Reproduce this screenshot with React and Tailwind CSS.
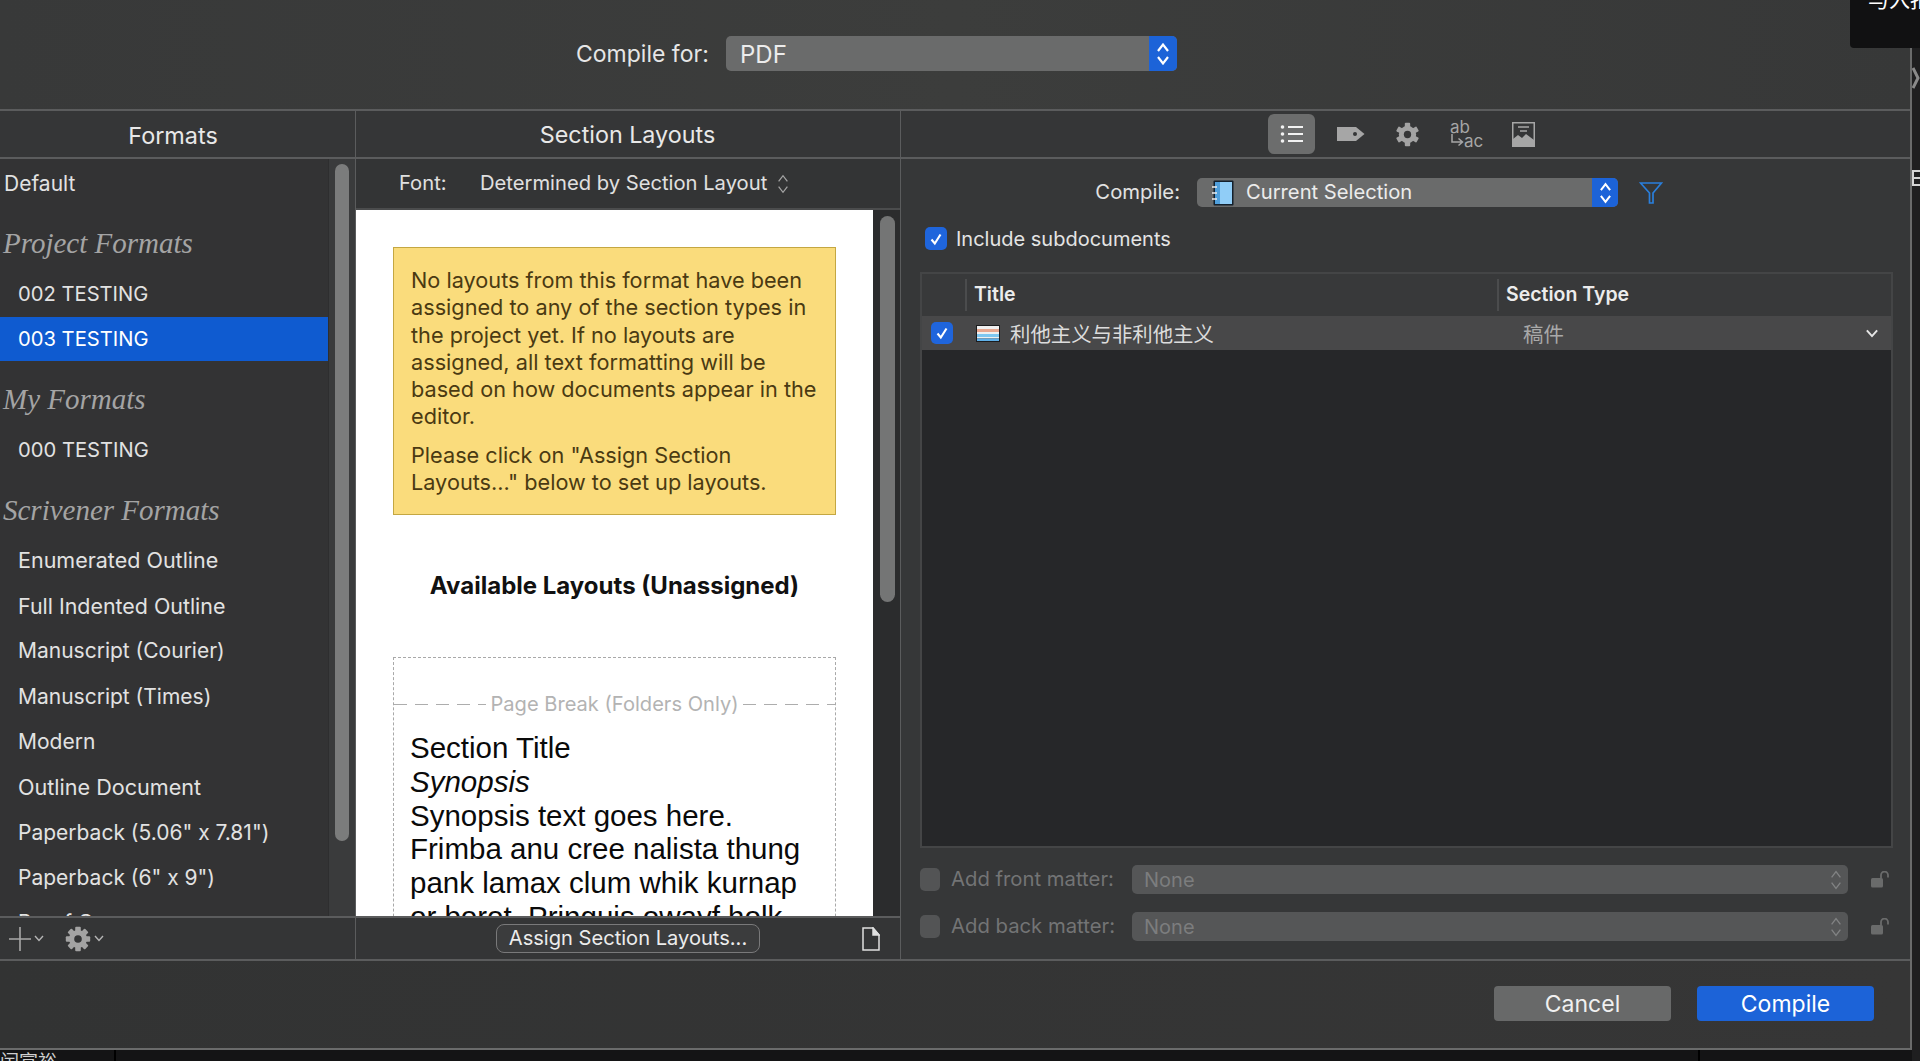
import React from "react";

const ui = "font-['Inter','Noto_Sans_CJK_SC',sans-serif]";

function Stepper({ className = "w-[16px] h-[26px]", color = "#fff", width = 2.2 }) {
  return (
    <svg viewBox="0 0 16 26" className={className} fill="none" stroke={color} strokeWidth={width}>
      <path d="M3 10 L8 3.5 L13 10" />
      <path d="M3 16 L8 22.5 L13 16" />
    </svg>
  );
}

function Chevron({ className = "w-[10px] h-[7px]", color = "#b5b5b5", width = 1.4 }) {
  return (
    <svg viewBox="0 0 10 7" className={className} fill="none" stroke={color} strokeWidth={width}>
      <path d="M1 1 L5 5.5 L9 1" />
    </svg>
  );
}

function Gear({ size = 26, teeth = 8, hole = "#343536", color = "#a3a3a3" }) {
  const items = Array.from({ length: teeth }, (_, i) => (i * 360) / teeth);
  return (
    <svg viewBox="0 0 26 26" width={size} height={size}>
      {items.map((a) => (
        <rect key={a} x="10.2" y="0.8" width="5.6" height="6" rx="1" fill={color} transform={`rotate(${a} 13 13)`} />
      ))}
      <circle cx="13" cy="13" r="9" fill={color} />
      <circle cx="13" cy="13" r="3.8" fill={hole} />
    </svg>
  );
}

function Check({ className = "w-[22px] h-[23px]" }) {
  return (
    <span className={`flex shrink-0 items-center justify-center rounded-[5px] bg-[#1f65dc] ${className}`}>
      <svg viewBox="0 0 16 16" className="w-[16px] h-[16px]" fill="none" stroke="#fff" strokeWidth="2.1">
        <path d="M3.5 8.5 L6.8 12.5 L12.5 3.5" />
      </svg>
    </span>
  );
}

function Lock() {
  return (
    <svg viewBox="0 0 20 17" className="w-[20px] h-[17px]" fill="none">
      <rect x="1" y="7" width="12" height="9.5" rx="1.5" fill="#6a6b6b" />
      <path d="M11 7 V4 A3.4 3.4 0 0 1 18 4 V6.5" stroke="#6a6b6b" strokeWidth="1.8" />
    </svg>
  );
}

function Row({ children, selected, className = "text-[21px]" }) {
  return (
    <div className={`flex h-[43.3px] mb-[2px] items-center pl-[18px] ${className} ${selected ? "bg-[#0f5bd0] text-white" : "text-[#e2e2e2]"}`}>
      {children}
    </div>
  );
}

function Head({ children, className = "" }) {
  return (
    <div className={`flex h-[45px] items-center pl-[3px] font-['Liberation_Serif',serif] italic text-[29px] text-[#a4a4a4] ${className}`}>
      {children}
    </div>
  );
}

function Matter({ label, className = "" }) {
  return (
    <div className={`flex h-[29px] items-center ${className}`}>
      <span className="w-[20px] h-[23px] rounded-[5px] bg-[#535455] shrink-0" />
      <span className="w-[192px] pl-[11px] text-[20.3px] text-[#737475] whitespace-nowrap">{label}</span>
      <div className="flex w-[716px] h-[29px] items-center justify-between rounded-[5px] bg-[#555657] pl-[12px] pr-[5px] text-[20px] text-[#7c7d7e]">
        <span>None</span>
        <Stepper className="w-[14px] h-[24px]" color="#828384" width={1.5} />
      </div>
      <span className="ml-[22px]"><Lock /></span>
    </div>
  );
}

export default function App() {
  return (
    <div className={`relative flex w-[1920px] h-[1061px] overflow-hidden bg-[#1a1a1b] ${ui}`}>
      <div className="flex flex-col w-[1912px] shrink-0">
        <div className="flex flex-col w-full h-[1050px] border-r-2 border-b-2 border-[#6a6b6b] bg-[#363738]">
          {/* top */}
          <div className="flex h-[109px] shrink-0 items-start pt-[36px] pl-[576px] bg-gradient-to-r from-[#383939] via-[#3c3d3c] to-[#373838]">
            <span className="w-[150px] h-[37px] flex items-center text-[23px] text-[#e6e6e6]">Compile for:</span>
            <div className="flex w-[451px] h-[35px] rounded-[5px] overflow-hidden bg-[#6a6b6b]">
              <span className="flex-1 flex items-center pl-[14px] pt-[2px] text-[24px] text-[#ececec]">PDF</span>
              <span className="flex w-[28px] items-center justify-center bg-[#1c63d8]">
                <Stepper />
              </span>
            </div>
          </div>
          {/* main */}
          <div className="flex h-[852px] shrink-0 border-y-2 border-[#5b5c5d]">
            {/* left */}
            <div className="flex flex-col w-[356px] shrink-0 border-r border-[#5b5c5d]">
              <div className="flex h-[48px] shrink-0 items-center justify-center pt-[3px] pr-[9px] border-b-2 border-[#5b5c5d] text-[23.4px] text-[#e8e8e8] bg-[#353637]">Formats</div>
              <div className="flex h-[757px] overflow-hidden bg-[#333334]">
                <div className="w-[328px] shrink-0 pt-[2px]">
                  <div className="flex h-[45px] items-center pl-[4px] text-[21px] text-[#e2e2e2]">Default</div>
                  <Head className="mt-[15px] mb-[6px]">Project Formats</Head>
                  <Row className="text-[20.2px]">002 TESTING</Row>
                  <Row selected className="text-[20.2px]">003 TESTING</Row>
                  <Head className="mt-[17px] mb-[6px]">My Formats</Head>
                  <Row className="text-[20.2px]">000 TESTING</Row>
                  <Head className="mt-[16px] mb-[6px]">Scrivener Formats</Head>
                  <Row className="text-[21.5px]">Enumerated Outline</Row>
                  <Row className="text-[21.4px]">Full Indented Outline</Row>
                  <Row>Manuscript (Courier)</Row>
                  <Row>Manuscript (Times)</Row>
                  <Row>Modern</Row>
                  <Row className="text-[21.6px]">Outline Document</Row>
                  <Row>Paperback (5.06" x 7.81")</Row>
                  <Row>Paperback (6" x 9")</Row>
                  <Row>Proof Copy</Row>
                </div>
                <div className="flex-1 bg-[#3a3b3c] border-l border-[#2e2e2f] pt-[5px] pl-[6px]">
                  <div className="w-[14px] h-[677px] rounded-full bg-[#7b7c7c]" />
                </div>
              </div>
              <div className="flex flex-1 items-center pl-[9px] border-t-2 border-[#5b5c5d] bg-[#343536]">
                <svg viewBox="0 0 22 26" className="w-[22px] h-[26px]" stroke="#a8a8a8" strokeWidth="1.6">
                  <path d="M11 1 V25 M0 13 H22" />
                </svg>
                <span className="ml-[3px]"><Chevron /></span>
                <span className="ml-[21px]"><Gear /></span>
                <span className="ml-[3px]"><Chevron /></span>
              </div>
            </div>
            {/* middle */}
            <div className="flex flex-col w-[545px] shrink-0 border-r border-[#5b5c5d]">
              <div className="flex h-[48px] shrink-0 items-center justify-center pt-[3px] pr-[1px] border-b-2 border-[#5b5c5d] text-[23.3px] text-[#e8e8e8] bg-[#353637]">Section Layouts</div>
              <div className="flex h-[51px] shrink-0 items-center pl-[43px] border-b-2 border-[#4b4c4d] text-[20.2px] text-[#e0e0e0] bg-[#333435]">
                <span className="w-[81px]">Font:</span>
                <span>Determined by Section Layout</span>
                <Stepper className="ml-[9px] w-[14px] h-[24px]" color="#a5a5a5" width={1.4} />
              </div>
              <div className="flex h-[706px] overflow-hidden">
                <div className="w-[517px] shrink-0 bg-white pt-[37px] pl-[37px] pr-[37px]">
                  <div className="border border-[#c4a742] bg-[#fadc7c] pt-[19px] pb-[18px] pl-[17px] pr-[4px] text-[21.7px] leading-[27.3px] text-[#4a3a12] whitespace-nowrap">
                    <p className="mb-[11px]">
                      No layouts from this format have been<br />
                      assigned to any of the section types in<br />
                      the project yet. If no layouts are<br />
                      assigned, all text formatting will be<br />
                      based on how documents appear in the<br />
                      editor.
                    </p>
                    <p>
                      Please click on "Assign Section<br />
                      Layouts..." below to set up layouts.
                    </p>
                  </div>
                  <div className="mt-[57px] h-[28px] flex items-center justify-center text-[24px] font-bold text-[#111]">Available Layouts (Unassigned)</div>
                  <div className="mt-[57px] border border-dashed border-[#a9a9a9] pt-[31px] h-[320px]">
                    <div className="flex items-center h-[30px] text-[20.1px] text-[#b3b3b3] whitespace-nowrap">
                      <span className="flex-1 h-[1.5px] bg-[repeating-linear-gradient(90deg,#adadad_0,#adadad_13px,transparent_13px,transparent_21px)]" />
                      <span className="px-[4px]">Page Break (Folders Only)</span>
                      <span className="flex-1 h-[1.5px] bg-[repeating-linear-gradient(90deg,#adadad_0,#adadad_13px,transparent_13px,transparent_21px)]" />
                    </div>
                    <div className="pl-[16px] pr-[4px] pt-[12px] font-['Liberation_Sans',sans-serif] text-[29.5px] leading-[33.7px] text-[#0a0a0a] whitespace-nowrap">
                      <div>Section Title</div>
                      <div className="italic">Synopsis</div>
                      <div>Synopsis text goes here.</div>
                      <div>
                        Frimba anu cree nalista thung<br />
                        pank lamax clum whik kurnap<br />
                        or borot. Pringuis owayf holk
                      </div>
                    </div>
                  </div>
                </div>
                <div className="flex-1 bg-[#2b2c2d] pt-[6px] pl-[7px]">
                  <div className="w-[15px] h-[386px] rounded-full bg-[#747575]" />
                </div>
              </div>
              <div className="flex flex-1 items-center border-t-2 border-[#5b5c5d] bg-[#343536] pl-[140px]">
                <button className="w-[264px] h-[29px] rounded-[8px] border-[1.5px] border-[#79797a] bg-[#3b3c3d] text-[20.1px] text-[#ececec] leading-none">Assign Section Layouts...</button>
                <svg viewBox="0 0 18 24" className="ml-[102px] w-[18px] h-[24px]" fill="none" stroke="#e0e0e0" strokeWidth="1.5">
                  <path d="M1 1 H11 L17 8 V23 H1 Z" />
                  <path d="M11 1 V8 H17 Z" fill="#e0e0e0" />
                </svg>
              </div>
            </div>
            {/* right */}
            <div className="flex flex-col flex-1 min-w-0">
              <div className="flex h-[48px] shrink-0 items-center pl-[367px] border-b-2 border-[#5b5c5d] bg-[#353637]">
                <span className="flex w-[47px] h-[40px] items-center justify-center rounded-[6px] bg-[#6c6d6d]">
                  <svg viewBox="0 0 24 20" className="w-[24px] h-[20px]" fill="none" stroke="#f2f2f2" strokeWidth="1.8">
                    <circle cx="2.5" cy="3" r="1.8" fill="#f2f2f2" stroke="none" />
                    <circle cx="2.5" cy="10" r="1.8" fill="#f2f2f2" stroke="none" />
                    <circle cx="2.5" cy="17" r="1.8" fill="#f2f2f2" stroke="none" />
                    <path d="M8 3 H23 M8 10 H23 M8 17 H23" />
                  </svg>
                </span>
                <svg viewBox="0 0 28 16" className="ml-[22px] w-[28px] h-[16px]">
                  <path d="M0 1 H19 L27.5 8 L19 15 H0 Z" fill="#a6a6a6" />
                  <circle cx="18" cy="8" r="2" fill="#353637" />
                </svg>
                <span className="ml-[30px]"><Gear teeth={6} hole="#353637" size={25} /></span>
                <span className="ml-[30px] flex flex-col w-[36px] text-[#a6a6a6] text-[17px] leading-[14px]">
                  <span>ab</span>
                  <span className="flex items-center">
                    <svg viewBox="0 0 14 14" className="w-[14px] h-[14px]" fill="none" stroke="#a6a6a6" strokeWidth="1.5">
                      <path d="M2 0 V8 H12 M8.5 4.5 L12.5 8 L8.5 11.5" />
                    </svg>
                    <span>ac</span>
                  </span>
                </span>
                <svg viewBox="0 0 23 25" className="ml-[26px] w-[23px] h-[25px]">
                  <rect x="0.75" y="0.75" width="21.5" height="23.5" fill="none" stroke="#a6a6a6" strokeWidth="1.5" />
                  <path d="M6 5 H17 M8 9 H15" stroke="#a6a6a6" strokeWidth="1.5" />
                  <path d="M1 24 V17 L6 13 L10 16 L14 12 L22 18 V24 Z" fill="#a6a6a6" />
                </svg>
              </div>
              <div className="flex flex-col flex-1 pt-[19px] pl-[19px] pr-[17px]">
                <div className="flex h-[29px] items-center">
                  <span className="w-[277px] pr-[17px] text-right text-[20.3px] text-[#e2e2e2]">Compile:</span>
                  <div className="flex w-[421px] h-[29px] rounded-[5px] overflow-hidden bg-[#6a6b6b]">
                    <span className="flex flex-1 items-center pl-[15px] text-[20.2px] text-[#ececec]">
                      <svg viewBox="0 0 22 26" className="w-[22px] h-[26px]">
                        <rect x="1.5" y="0.5" width="20" height="25" rx="1" fill="#14202c" />
                        <rect x="3" y="2" width="17" height="22" fill="#90cdf7" />
                        <rect x="3" y="2" width="5" height="22" fill="#4f9fdc" />
                        <path d="M0 7 H5 M0 13 H5 M0 19 H5" stroke="#eee" strokeWidth="1.6" />
                      </svg>
                      <span className="ml-[12px]">Current Selection</span>
                    </span>
                    <span className="flex w-[26px] items-center justify-center bg-[#1c63d8]">
                      <Stepper className="w-[15px] h-[24px]" />
                    </span>
                  </div>
                  <svg viewBox="0 0 24 22" className="ml-[21px] w-[24px] h-[22px]" fill="none" stroke="#2a7fdc" strokeWidth="1.7">
                    <path d="M1.5 1 H22.5 L14 11 V21 H10.5 V11 Z" />
                  </svg>
                </div>
                <div className="flex h-[23px] items-center mt-[20px] pl-[5px]">
                  <Check />
                  <span className="ml-[9px] text-[20px] text-[#e4e4e4]">Include subdocuments</span>
                </div>
                <div className="flex flex-col h-[576px] mt-[22px] border-2 border-[#444546] bg-[#262729]">
                  <div className="flex h-[42px] shrink-0 items-center bg-[#38393a] text-[19.5px] font-semibold text-[#ececec]">
                    <span className="flex h-[32px] w-[45px] items-center border-r-2 border-[#4b4c4d]" />
                    <span className="flex h-[32px] w-[532px] items-center pl-[7px] border-r-2 border-[#4b4c4d]">Title</span>
                    <span className="pl-[7px]">Section Type</span>
                  </div>
                  <div className="flex h-[34px] shrink-0 items-center bg-[#484849] text-[20.4px] text-[#dcdcdc]">
                    <span className="ml-[9px]"><Check className="w-[22px] h-[22px]" /></span>
                    <svg viewBox="0 0 24 17" className="ml-[23px] w-[24px] h-[17px]">
                      <rect width="24" height="17" fill="#1c1c1e" />
                      <rect x="1" y="1" width="22" height="3" fill="#f0f0f0" />
                      <rect x="1" y="4" width="22" height="3" fill="#e9a78f" />
                      <rect x="1" y="7" width="22" height="2" fill="#f0f0f0" />
                      <rect x="1" y="9" width="22" height="3" fill="#7fc7f0" />
                      <rect x="1" y="12" width="22" height="1.5" fill="#f0f0f0" />
                      <rect x="1" y="13.5" width="22" height="2.5" fill="#5fb0e8" />
                    </svg>
                    <span className="ml-[10px] w-[513px] font-['Noto_Sans_CJK_SC',sans-serif]">利他主义与非利他主义</span>
                    <span className="text-[#a9a9a9] w-[342px] font-['Noto_Sans_CJK_SC',sans-serif]">稿件</span>
                    <Chevron className="w-[14px] h-[9px]" color="#e6e6e6" width={1.5} />
                  </div>
                </div>
                <Matter label="Add front matter:" className="mt-[17px]" />
                <Matter label="Add back matter:" className="mt-[18px]" />
              </div>
            </div>
          </div>
          {/* bottom */}
          <div className="flex flex-1 items-start justify-end pt-[25px] pr-[36px] bg-gradient-to-r from-[#323333] to-[#363636]">
            <button className="w-[177px] h-[35px] pt-[2px] rounded-[4px] bg-[#686969] text-[23px] text-[#f0f0f0] leading-none">Cancel</button>
            <button className="ml-[26px] w-[177px] h-[35px] pt-[2px] rounded-[4px] bg-[#1c63d8] text-[23px] text-white leading-none">Compile</button>
          </div>
        </div>
        <div className="flex h-[11px] overflow-hidden bg-[#141415] text-[#cfcfcf]">
          <span className="w-[116px] shrink-0 border-r-2 border-[#000] -mt-[1px] text-[19px] leading-[24px] font-['Noto_Sans_CJK_SC',sans-serif] whitespace-nowrap overflow-hidden">闰富裕</span>
          <span className="w-[1584px] shrink-0 border-r-2 border-[#000]" />
        </div>
      </div>
      <div className="flex-1 bg-[#1f1f20]" />
      <div className="absolute right-0 top-0 w-[70px] h-[48px] overflow-hidden rounded-bl-[4px] bg-[#111112]">
        <span className="absolute left-[18px] -top-[17px] whitespace-nowrap text-[21px] text-white font-['Noto_Sans_CJK_SC',sans-serif]">与入扣</span>
      </div>
      <svg viewBox="0 0 8 24" className="absolute left-[1912px] top-[66px] w-[8px] h-[24px]" fill="none" stroke="#8a8a8a" strokeWidth="3">
        <path d="M1 2 L6 12 L1 22" />
      </svg>
      <svg viewBox="0 0 8 16" className="absolute left-[1912px] top-[170px] w-[8px] h-[16px]" fill="none" stroke="#d5d5d5" strokeWidth="2">
        <path d="M8 1 H1 V15 H8 M1 8 H8" />
      </svg>
    </div>
  );
}
